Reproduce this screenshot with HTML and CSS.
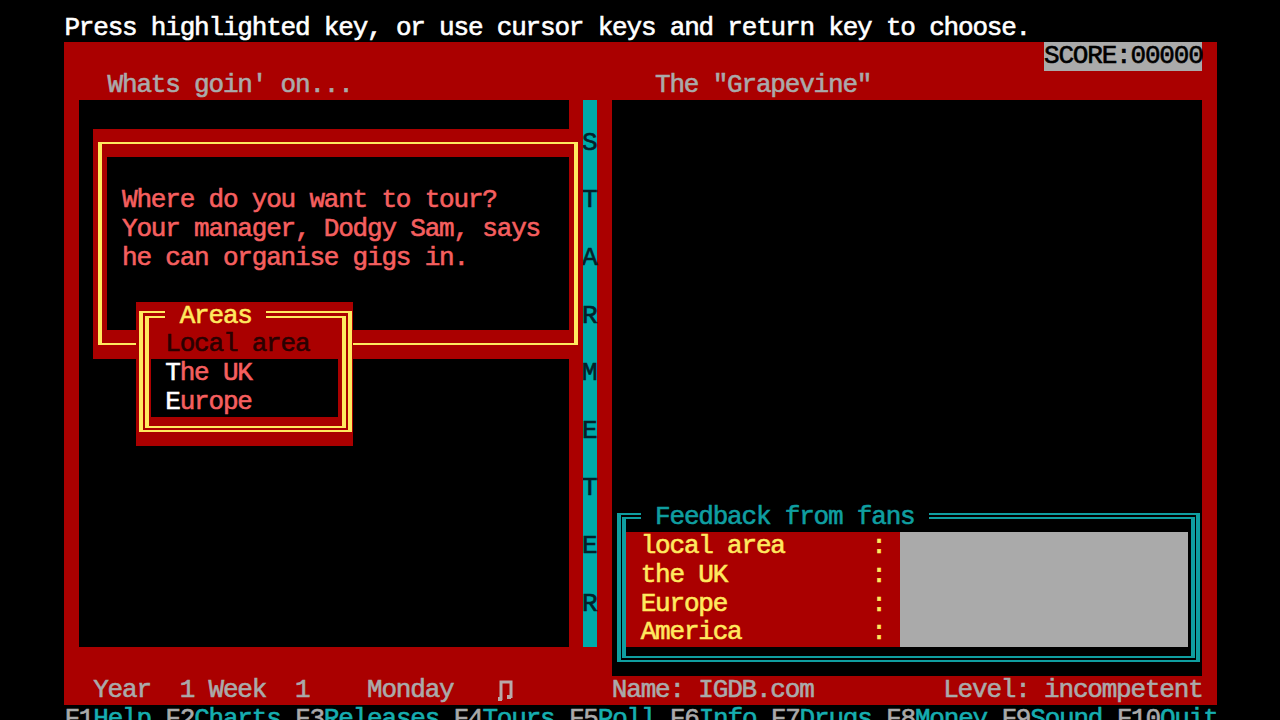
FILE: index.html
```html
<!DOCTYPE html>
<html lang="en">
<head>
    <meta charset="UTF-8">
    <title>Rock Star Ate My Hamster</title>
    <link rel="stylesheet" href="styles.css">
</head>
<body>
    <div class="screen">
        <div class="prompt">Press highlighted key, or use cursor keys and return key to choose.</div>
        <div class="backdrop"></div>
        <div class="score">SCORE:00000</div>
        <div class="news-title">Whats goin' on...</div>
        <div class="grape-title">The "Grapevine"</div>
        <div class="news-panel"></div>
        <div class="meter">
            <span>S</span><span>T</span><span>A</span><span>R</span><span>M</span><span>E</span><span>T</span><span>E</span><span>R</span>
        </div>
        <div class="grape-panel"></div>

        <!-- tour dialog -->
        <div class="tour-window">
            <div class="tour-frame">
                <div class="tour-inner"></div>
            </div>
        </div>
        <div class="tour-text">Where do you want to tour?
Your manager, Dodgy Sam, says
he can organise gigs in.</div>

        <!-- areas menu -->
        <div class="areas-window">
            <div class="areas-outer">
                <div class="areas-inner"></div>
            </div>
        </div>
        <div class="areas-title"> Areas </div>
        <div class="areas-current">Local area</div>
        <div class="areas-list"><span class="hot">T</span>he UK
<span class="hot">E</span>urope</div>

        <!-- fans feedback -->
        <div class="fans-window">
            <div class="fans-outer">
                <div class="fans-inner"></div>
            </div>
        </div>
        <div class="fans-title"> Feedback from fans </div>
        <div class="fans-list">local area      :
the UK          :
Europe          :
America         :</div>
        <div class="fans-bars"></div>

        <div class="status-date">Year  1 Week  1    Monday</div>
        <svg class="note" width="15" height="21" viewBox="0 0 15 21">
            <path d="M3 20V2H13V18" fill="none" stroke="#b9a9a9" stroke-width="3"/>
            <path d="M0 17H4V21H0ZM9 15H13V19H9Z" fill="#b9a9a9"/>
        </svg>
        <div class="status-name">Name: IGDB.com</div>
        <div class="status-level">Level: incompetent</div>

        <div class="keys">F1<span class="key">Help</span> F2<span class="key">Charts</span> F3<span class="key">Releases</span> F4<span class="key">Tours</span> F5<span class="key">Poll</span> F6<span class="key">Info</span> F7<span class="key">Drugs</span> F8<span class="key">Money</span> F9<span class="key">Sound</span> F10<span class="key">Quit</span></div>
    </div>
</body>
</html>
```

FILE: styles.css
```css
html, body {
    margin: 0;
    padding: 0;
    height: 720px;
    overflow: hidden;
    background-color: #000;
}

/* text mode screen: 80 x 25 cells */
.screen {
    display: grid;
    grid-template-columns: repeat(80, 14.41px);
    grid-template-rows: repeat(25, 28.8px);
    width: 1152.8px;
    margin-left: 64.4px;
    padding-top: 13.6px;
    font-family: "Liberation Mono", "DejaVu Sans Mono", monospace;
    font-size: 26px;
    -webkit-text-stroke: 0.6px currentColor;
    letter-spacing: -1.19px;
    line-height: 28.8px;
    color: #aaa;
    white-space: pre;
}

.prompt {
    grid-column: 1 / 81;
    grid-row: 1;
    color: #fff;
}

.backdrop {
    grid-column: 1 / 81;
    grid-row: 2 / 25;
    background-color: #aa0000;
}

.score {
    grid-column: 69 / 80;
    grid-row: 2;
    background-color: #aaa;
    color: #000;
}

.news-title {
    grid-column: 4 / 30;
    grid-row: 3;
}

.grape-title {
    grid-column: 42 / 69;
    grid-row: 3;
}

.news-panel {
    grid-column: 2 / 36;
    grid-row: 4 / 23;
    background-color: #000;
}

.grape-panel {
    grid-column: 39 / 80;
    grid-row: 4 / 24;
    background-color: #000;
}

.meter {
    grid-column: 37;
    grid-row: 4 / 23;
    display: flex;
    flex-direction: column;
    gap: 28.8px;
    box-sizing: border-box;
    padding-top: 28.8px;
    background-color: #00aaaa;
    color: #04202a;
}

.meter span {
    display: block;
    height: 28.8px;
    margin-left: -1px;
}

.tour-window {
    grid-column: 3 / 37;
    grid-row: 5 / 13;
    display: flex;
    box-sizing: border-box;
    padding: 13px 5px 14px 5px;
    background-color: #aa0000;
}

.tour-frame {
    flex: 1;
    display: flex;
    padding: 13px 5px 13px 5px;
    border: solid #ffe95f;
    border-width: 2px 4px;
}

.tour-inner {
    flex: 1;
    background-color: #000;
}

.tour-text {
    grid-column: 5 / 36;
    grid-row: 7 / 10;
    color: #f55f5f;
}

.areas-window {
    grid-column: 6 / 21;
    grid-row: 11 / 16;
    display: flex;
    box-sizing: border-box;
    padding: 9px 1px 14px 3px;
    background-color: #aa0000;
}

.areas-outer {
    flex: 1;
    display: flex;
    padding: 3px 2px 2px 2px;
    border: solid #ffe95f;
    border-width: 2px 4px;
}

.areas-inner {
    flex: 1;
    border: solid #ffe95f;
    border-width: 2px 4px;
}

.areas-title {
    grid-column: 8 / 15;
    grid-row: 11;
    background-color: #aa0000;
    color: #ffe95f;
}

.areas-current {
    grid-column: 8 / 20;
    grid-row: 12;
    color: #2a0000;
}

.areas-list {
    grid-column: 7 / 20;
    grid-row: 13 / 15;
    padding-left: 14.41px;
    background-color: #000;
    color: #f55f5f;
}

.hot {
    color: #fff;
}

.fans-window {
    grid-column: 39 / 80;
    grid-row: 18 / 23;
    display: flex;
    box-sizing: border-box;
    padding: 10px 2px 14px 5px;
    height: 172.8px;
}

.fans-outer {
    flex: 1;
    display: flex;
    padding: 2px 1px 2px 1px;
    border: solid #0f9ea0;
    border-width: 2px 4px;
}

.fans-inner {
    flex: 1;
    border: solid #0f9ea0;
    border-width: 2px 4px;
}

.fans-title {
    grid-column: 41 / 61;
    grid-row: 18;
    background-color: #000;
    color: #0f9ea0;
}

.fans-list {
    grid-column: 40 / 59;
    grid-row: 19 / 23;
    padding-left: 14.41px;
    background-color: #aa0000;
    color: #ffe95f;
}

.fans-bars {
    grid-column: 59 / 79;
    grid-row: 19 / 23;
    background-color: #aaa;
}

.status-date {
    grid-column: 3 / 30;
    grid-row: 24;
}

.note {
    grid-column: 31 / 33;
    grid-row: 24;
    align-self: center;
    margin-left: 1px;
}

.status-name {
    grid-column: 39 / 60;
    grid-row: 24;
}

.status-level {
    grid-column: 62 / 80;
    grid-row: 24;
}

.keys {
    grid-column: 1 / 81;
    grid-row: 25;
    color: #aaa;
}

.key {
    color: #16aeb0;
}
```
